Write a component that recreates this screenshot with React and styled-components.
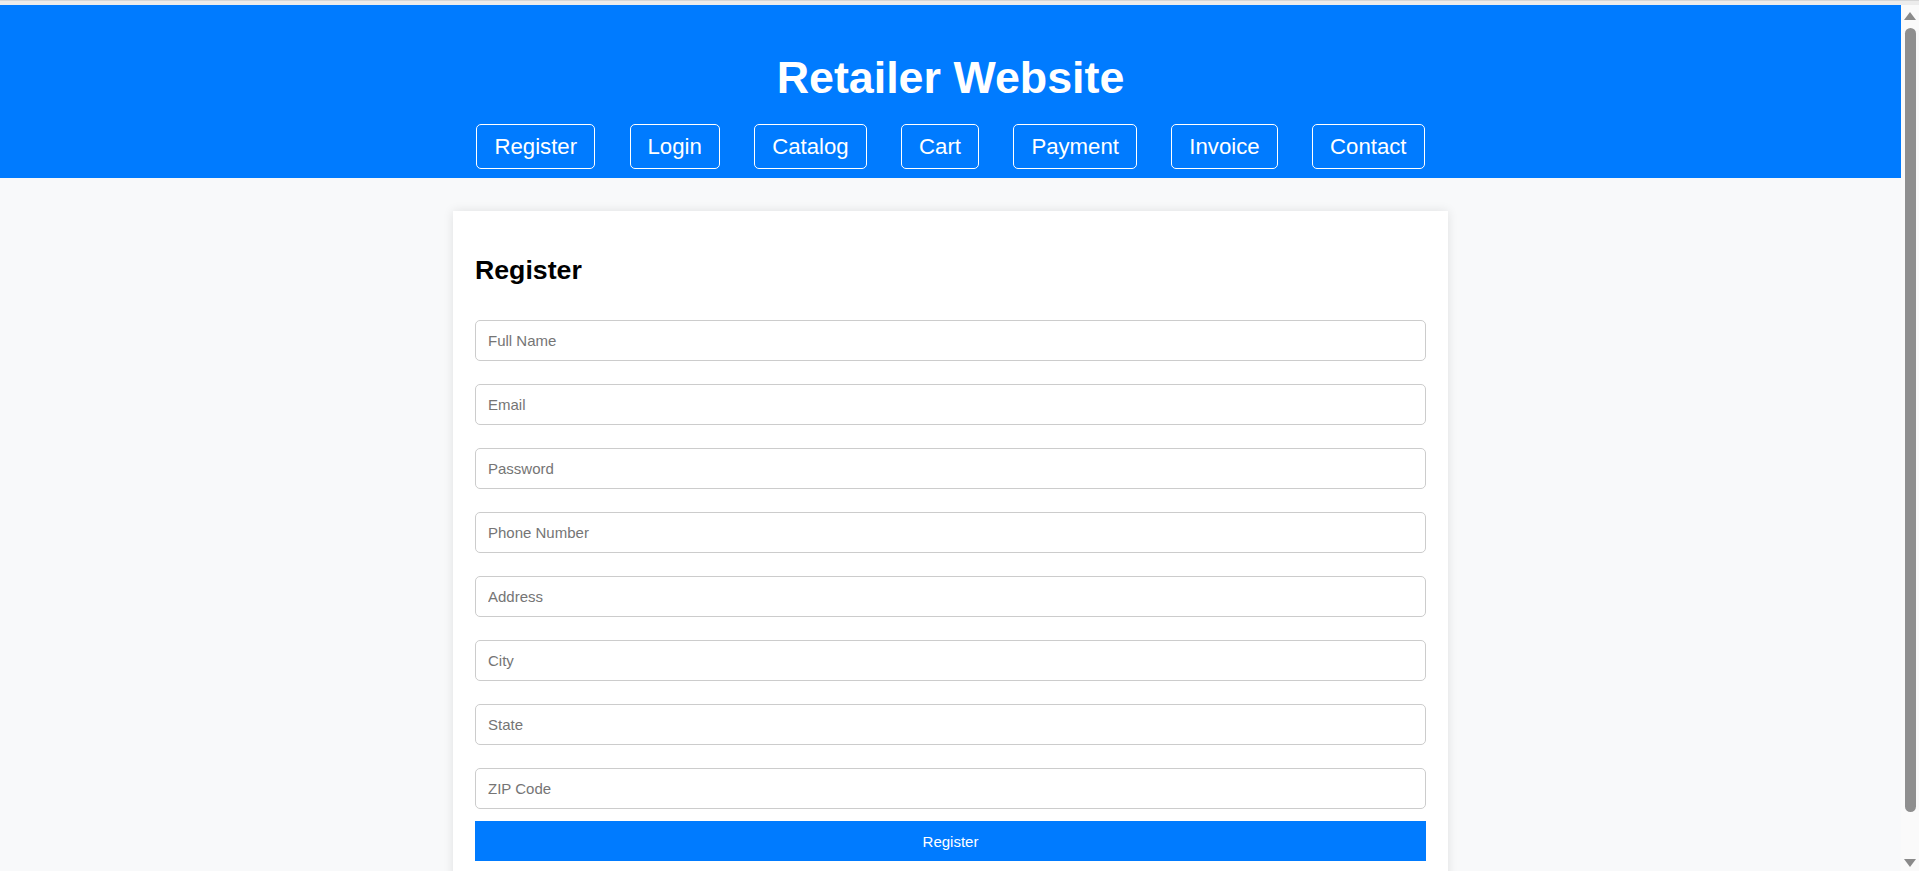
import styled, { createGlobalStyle } from "styled-components";

const GlobalStyle = createGlobalStyle`
  html, body {
    margin: 0;
    padding: 0;
    height: 100%;
    overflow: hidden;
    background-color: #f8f9fa;
    font-family: "Liberation Sans", Arial, sans-serif;
  }
  * {
    box-sizing: border-box;
  }
`;

const Frame = styled.div`
  display: flex;
  flex-direction: column;
  height: 100vh;
`;

const TopEdge = styled.div`
  height: 5px;
  flex-shrink: 0;
  background-color: #ececec;
  border-top: 1px solid #d6d6d6;
`;

const Window = styled.div`
  flex: 1;
  display: flex;
  min-height: 0;
`;

const Viewport = styled.div`
  flex: 1;
  overflow: hidden;
  background-color: #f8f9fa;
`;

const ScrollRail = styled.div`
  width: 18px;
  flex-shrink: 0;
  display: flex;
  flex-direction: column;
  align-items: center;
  background-color: #fafafa;
  padding: 7px 0 4px;
`;

const Arrow = styled.div`
  width: 0;
  height: 0;
  border-left: 6px solid transparent;
  border-right: 6px solid transparent;
  ${({ $down }) =>
    $down
      ? "border-top: 8px solid #8a8a8a; margin-top: auto;"
      : "border-bottom: 8px solid #8a8a8a;"}
`;

const Thumb = styled.div`
  width: 11px;
  height: 784px;
  margin-top: 8px;
  border-radius: 6px;
  background-color: #8f8f8f;
`;

const Header = styled.header`
  background-color: #007bff;
  color: white;
  text-align: center;
  padding: 48px 0 9px;
`;

const Title = styled.h1`
  margin: 0;
  font-family: "Liberation Sans", Arial, sans-serif;
  font-size: 44.8px;
  font-weight: 700;
  line-height: 48px;
`;

const Nav = styled.nav`
  display: flex;
  justify-content: center;
  gap: 34.4px;
  margin-top: 23px;
`;

const NavLink = styled.a`
  display: block;
  color: white;
  text-decoration: none;
  font-size: 22.2px;
  line-height: 26px;
  padding: 8.5px 17px;
  border: 1px solid white;
  border-radius: 5px;
  cursor: pointer;
`;

const Main = styled.main`
  display: flex;
  justify-content: center;
  padding: 33px 0 45px;
`;

const Card = styled.section`
  width: 995px;
  background-color: white;
  padding: 22px;
  box-shadow: 0 0 10px rgba(0, 0, 0, 0.1);
`;

const Heading = styled.h2`
  margin: 22px 0 34px;
  font-family: "Liberation Sans", Arial, sans-serif;
  font-size: 26.7px;
  line-height: 31px;
  font-weight: 700;
  color: #000;
`;

const Form = styled.form`
  display: flex;
  flex-direction: column;
  gap: 23px;
`;

const Input = styled.input`
  width: 100%;
  height: 41px;
  padding: 0 12px;
  font-size: 15px;
  font-family: "Liberation Sans", Arial, sans-serif;
  border: 1px solid #ccc;
  border-radius: 5px;
  outline: none;

  &::placeholder {
    color: #757575;
  }
`;

const SubmitButton = styled.button`
  width: 100%;
  height: 40px;
  margin-top: -11px;
  background-color: #007bff;
  color: white;
  border: none;
  font-size: 15px;
  font-family: "Liberation Sans", Arial, sans-serif;
  cursor: pointer;
`;

const links = ["Register", "Login", "Catalog", "Cart", "Payment", "Invoice", "Contact"];

const fields = [
  { name: "fullName", type: "text", placeholder: "Full Name" },
  { name: "email", type: "email", placeholder: "Email" },
  { name: "password", type: "password", placeholder: "Password" },
  { name: "phone", type: "tel", placeholder: "Phone Number" },
  { name: "address", type: "text", placeholder: "Address" },
  { name: "city", type: "text", placeholder: "City" },
  { name: "state", type: "text", placeholder: "State" },
  { name: "zip", type: "text", placeholder: "ZIP Code" },
];

export default function App() {
  const handleSubmit = (e) => {
    e.preventDefault();
  };

  return (
    <Frame>
      <GlobalStyle />
      <TopEdge />
      <Window>
        <Viewport>
          <Header>
            <Title>Retailer Website</Title>
            <Nav>
              {links.map((link) => (
                <NavLink key={link} href={`#${link.toLowerCase()}`}>
                  {link}
                </NavLink>
              ))}
            </Nav>
          </Header>
          <Main>
            <Card>
              <Heading>Register</Heading>
              <Form onSubmit={handleSubmit}>
                {fields.map((f) => (
                  <Input key={f.name} name={f.name} type={f.type} placeholder={f.placeholder} />
                ))}
                <SubmitButton type="submit">Register</SubmitButton>
              </Form>
            </Card>
          </Main>
        </Viewport>
        <ScrollRail>
          <Arrow />
          <Thumb />
          <Arrow $down />
        </ScrollRail>
      </Window>
    </Frame>
  );
}
